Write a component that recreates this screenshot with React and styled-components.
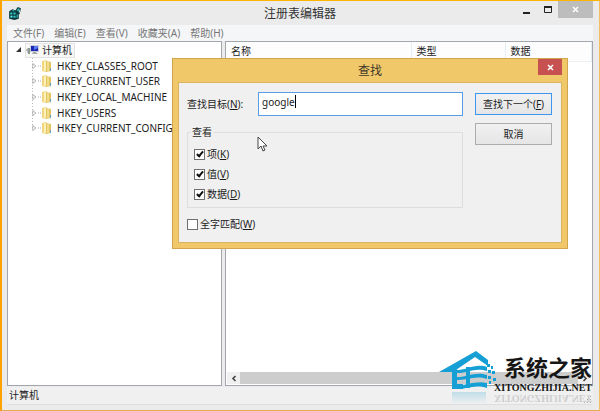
import React, { useState } from "react";
import styled, { createGlobalStyle } from "styled-components";

const ui = '"Noto Sans", "Noto Sans CJK SC", sans-serif';

const Global = createGlobalStyle`
  * { box-sizing: border-box; }
  body { margin: 0; background: #ebebeb; }
  button, input { font: inherit; color: inherit; }
`;

const Window = styled.main`
  position: relative;
  display: flex;
  flex-direction: column;
  height: 100vh;
  padding: 0 6px 5px 5px;
  overflow: hidden;
  background: #ebebeb;
  border-style: solid;
  border-width: 1px 1px 1px 2px;
  border-color: #ffb400 #f3bd62 #e5ab50 #ffa200;
  font: 10px/14px ${ui};
  color: #1c1c1c;
`;

const TitleBar = styled.header`
  display: grid;
  grid-template-columns: 100px 1fr 100px;
  align-items: center;
  height: 24px;
  flex: none;
`;

const Title = styled.h1`
  margin: 0;
  padding-top: 1px;
  text-align: center;
  font: 12px/20px ${ui};
  color: #333;
`;

const Controls = styled.div`
  display: flex;
  justify-content: flex-end;
  align-self: start;
`;

const Control = styled.button`
  display: grid;
  place-items: center;
  width: ${(p) => (p.$wide ? 35 : 21)}px;
  height: 17px;
  padding: 0;
  border: 0;
  background: ${(p) => (p.$wide ? "#bdbdbd" : "transparent")};
`;

const MenuBar = styled.nav`
  display: flex;
  gap: 10px;
  flex: none;
  height: 16px;
  padding-left: 6px;
  background: #f5f6f7;
`;

const MenuItem = styled.button`
  padding: 0;
  border: 0;
  background: none;
  line-height: 16px;
  color: #777;
`;

const Panes = styled.div`
  display: grid;
  grid-template-columns: 215px 1fr;
  gap: 3px;
  flex: 1;
  min-height: 0;
`;

const Pane = styled.section`
  display: flex;
  flex-direction: column;
  min-width: 0;
  background: #fff;
  border: 1px solid #a3a6ad;
`;

const TreeRoot = styled.div`
  display: flex;
  align-items: center;
  gap: 3px;
  height: 16px;
  padding-left: 8px;
`;

const RootLabel = styled.div`
  display: flex;
  align-items: center;
  gap: 2px;
  padding-right: 2px;
  height: 15px;
  background: #f7f7f7;
  border: 1px solid #e2e2e2;
`;

const TreeList = styled.ul`
  display: grid;
  grid-auto-rows: 1fr;
  height: 78px;
  margin: 0 0 0 24px;
  padding: 0;
  list-style: none;
  background: repeating-linear-gradient(#bbb 0 1px, transparent 1px 3px) 0 0 / 1px 70px no-repeat;
`;

const TreeItem = styled.li`
  display: flex;
  align-items: center;
  gap: 4px;
  white-space: nowrap;
`;

const Table = styled.table`
  width: 100%;
  table-layout: fixed;
  border-collapse: collapse;
`;

const Th = styled.th`
  width: ${(p) => p.$width || "auto"};
  height: 19px;
  padding: 0 0 0 5px;
  text-align: left;
  font-weight: 400;
  border-bottom: 1px solid #edf1f6;
  border-right: 1px solid #e7edf5;
  background: #fdfdfd;
`;

const ScrollBar = styled.div`
  display: grid;
  grid-template-columns: 13px 1fr 13px;
  height: 12px;
  margin: auto 1px 1px;
  background: #f0f0f0;
`;

const ScrollButton = styled.button`
  display: grid;
  place-items: center;
  padding: 0;
  border: 0;
  background: #f0f0f0;
`;

const Thumb = styled.div`
  background: #cdcdcd;
`;

const Status = styled.footer`
  display: flex;
  justify-content: space-between;
  align-items: flex-end;
  flex: none;
  height: 18px;
  margin-top: 1px;
  padding: 0 1px 0 2px;
  line-height: 17px;
  background: #f0f0f0;
  border-bottom: 1px solid #dedede;
`;

const Dialog = styled.div`
  position: absolute;
  top: 57px;
  left: 170px;
  width: 396px;
  padding: 0 5px 5px;
  background: #f0c869;
  border: 1px solid #cfa54d;
`;

const DialogBar = styled.header`
  display: grid;
  grid-template-columns: 24px 1fr 24px;
  height: 23px;
`;

const DialogTitle = styled.h2`
  margin: 0;
  text-align: center;
  font: 12px/23px ${ui};
  color: #40382a;
`;

const CloseButton = styled.button`
  display: grid;
  place-items: center;
  height: 16px;
  padding: 0;
  border: 0;
  background: #c75050;
`;

const Form = styled.form`
  display: grid;
  grid-template-columns: 1fr 77px;
  gap: 12px;
  padding: 9px 9px 11px 8px;
  background: #f0f0f0;
  border: 1px solid #d9b463;
`;

const Column = styled.div`
  display: flex;
  flex-direction: column;
`;

const Actions = styled(Column)`
  gap: 8px;
  padding-top: 1px;
`;

const FieldRow = styled.div`
  display: grid;
  grid-template-columns: 71px 1fr;
  align-items: center;
`;

const Field = styled.div`
  position: relative;
  display: grid;

  &::after {
    content: "";
    position: absolute;
    left: 37px;
    top: 3px;
    width: 1px;
    height: 13px;
    background: #000;
  }
`;

const TextInput = styled.input`
  min-width: 0;
  height: 24px;
  padding: 0 3px 5px;
  border: 1px solid #569de5;
  outline: 0;
  background: #fff;
  caret-color: transparent;
`;

const Action = styled.button`
  height: 22px;
  padding: 0;
  border: 1px solid ${(p) => (p.$primary ? "#3c96f0" : "#acacac")};
  background: linear-gradient(#f1f1f1, #e5e5e5);
`;

const Group = styled.fieldset`
  display: flex;
  flex-direction: column;
  gap: 6px;
  min-width: 0;
  margin: 9px 0;
  padding: 8px 6px 6px;
  border: 1px solid #dedede;
`;

const Legend = styled.legend`
  margin-left: -3px;
  padding: 0 2px 0 1px;
`;

const CheckLabel = styled.label`
  display: flex;
  align-items: center;
  gap: 2px;
  height: 14px;
`;

const Check = styled.input`
  appearance: none;
  display: grid;
  place-items: center;
  width: 11px;
  height: 11px;
  margin: 0;
  background: #fff;
  border: 1px solid #707070;

  &:checked::before {
    content: "";
    width: 2px;
    height: 5px;
    margin-bottom: 2px;
    border: solid #111;
    border-width: 0 2px 2px 0;
    box-sizing: content-box;
    transform: rotate(40deg);
  }
`;

const Pointer = styled.svg`
  position: absolute;
  left: 255px;
  top: 135px;
`;

const Brand = styled.div`
  position: absolute;
  right: 7px;
  bottom: 3px;
  display: flex;
`;

const BrandText = styled.div`
  margin-left: -3px;
  padding-top: 3px;
  text-align: right;
  color: #161616;
`;

const BrandName = styled.div`
  margin-bottom: 5px;
  font: bold 22px/24px "Noto Sans CJK SC", sans-serif;
`;

const BrandSite = styled.div`
  font: bold 10px/10px "Liberation Serif", serif;
  ${(p) => p.$mirrored && "transform: scaleY(-1); opacity: 0.16;"}
`;

function RegistryIcon() {
  return (
    <svg width="15" height="15" viewBox="0 0 14 14" aria-hidden="true">
      <path d="M2 5l3-2 3 1 2-3 3 1-1 5-1 1v4l-4 1-5-1z" fill="#10393c" />
      <path d="M3 6h2v2H3zm3 0h2v2H6zm-3 3h2v2H3zm3 0h2v2H6zm3-1h1v3H9zM9 4l2-2 1 1-2 2zM5 4h2v1H5z" fill="#2cc3c3" />
      <path d="M11 4h1v2h-1zM4 9h1v1H4z" fill="#c5ffff" />
    </svg>
  );
}

function ComputerIcon() {
  return (
    <svg width="14" height="12" viewBox="0 0 14 12" aria-hidden="true">
      <path d="M0 6h2M2 4v5" stroke="#999" />
      <path d="M2 4h2v6H2z" fill="#8b9b93" />
      <path d="M4 1h9v7H4z" fill="#c5ccd5" />
      <path d="M5 2h7v5H5z" fill="#1825b5" />
      <path d="M8 2h4v2L8 6z" fill="#5b7cea" />
      <path d="M7 8h3l2 2H6z" fill="#a5a9ac" />
    </svg>
  );
}

function FolderIcon() {
  return (
    <svg width="21" height="14" viewBox="0 0 21 14" aria-hidden="true">
      <path d="M.8 4.5l3.2 2.5-3.2 2.5z" fill="#fff" stroke="#a0a0a0" strokeWidth=".8" />
      <path d="M6 7h3" stroke="#aaa" strokeDasharray="1 1" />
      <path d="M10 2l4-1 1 1v10l-1 1-4-1z" fill="#f0d780" />
      <path d="M14 2l5 1v9l-5 1z" fill="#e3c463" />
      <path d="M12 2h2v10h-2z" fill="#fbf0ba" />
      <path d="M15 3h2v9h-2z" fill="#f1dc8c" />
      <path d="M18 9h1v3h-1z" fill="#6aa0bb" />
    </svg>
  );
}

function CrossIcon() {
  return (
    <svg width="7" height="7" viewBox="0 0 7 7" aria-hidden="true">
      <path d="M1 1l5 5M6 1L1 6" stroke="#fff" strokeWidth="1.5" />
    </svg>
  );
}

function Chevron({ right }) {
  return (
    <svg width="6" height="7" viewBox="0 0 6 7" aria-hidden="true">
      <path d={right ? "M1.5 1L4 3.5 1.5 6" : "M4.5 1L2 3.5 4.5 6"} fill="none" stroke="#444" strokeWidth="1.6" />
    </svg>
  );
}

function GripIcon() {
  return (
    <svg width="8" height="8" viewBox="0 0 8 8" aria-hidden="true">
      <path d="M6 0h1v1H6zM3 3h1v1H3zM6 3h1v1H6zM0 6h1v1H0zM3 6h1v1H3zM6 6h1v1H6z" fill="#aaa" />
    </svg>
  );
}

function HouseLogo() {
  return (
    <svg width="58" height="56" viewBox="0 0 58 56" aria-hidden="true">
      <defs>
        <linearGradient id="fade" x1="0" y1="0" x2="0" y2="1">
          <stop offset="0" stopColor="#30a5d5" stopOpacity=".25" />
          <stop offset="1" stopColor="#30a5d5" stopOpacity="0" />
        </linearGradient>
      </defs>
      <g fill="#169fd5">
        <path d="M0 21L37 0l12 9v6L36 6 14 21z" />
        <path d="M13 19l5-3v17h6v5H13z" />
        <path d="M17 19c10 1 18-7 31-3v4c-13-4-20 3-31 2z" />
        <path d="M17 26c10 1 18-6 31-2v4c-13-4-20 2-31 1z" />
        <path d="M13 34c12 2 22-5 35-2v5c-12-4-20 1-30 1h-5z" />
        <path d="M27 16h4v21h-4z" />
        <path d="M48 13h3v3h-3zM52 15h2v3h-2zM49 19h3v3h-3zM53 20h3v3h-3zM49 25h3v3h-3zM54 27h3v3h-3zM50 30h2v3h-2z" />
      </g>
      <path d="M13 41h34v12H13z" fill="url(#fade)" />
    </svg>
  );
}

const menus = ["文件(F)", "编辑(E)", "查看(V)", "收藏夹(A)", "帮助(H)"];
const keys = ["HKEY_CLASSES_ROOT", "HKEY_CURRENT_USER", "HKEY_LOCAL_MACHINE", "HKEY_USERS", "HKEY_CURRENT_CONFIG"];
const scopes = [["项", "K"], ["值", "V"], ["数据", "D"]];

function CheckOption({ text, hotkey, checked }) {
  return (
    <CheckLabel>
      <Check type="checkbox" defaultChecked={checked} />
      <span>{text}(<u>{hotkey}</u>)</span>
    </CheckLabel>
  );
}

function FindDialog() {
  const [query, setQuery] = useState("google");
  return (
    <Dialog role="dialog" aria-labelledby="find-title">
      <DialogBar>
        <span />
        <DialogTitle id="find-title">查找</DialogTitle>
        <CloseButton aria-label="关闭"><CrossIcon /></CloseButton>
      </DialogBar>
      <Form onSubmit={(e) => e.preventDefault()}>
        <Column>
          <FieldRow>
            <label htmlFor="query">查找目标(<u>N</u>):</label>
            <Field>
              <TextInput id="query" value={query} onChange={(e) => setQuery(e.target.value)} />
            </Field>
          </FieldRow>
          <Group>
            <Legend>查看</Legend>
            {scopes.map(([text, hotkey]) => (
              <CheckOption key={hotkey} text={text} hotkey={hotkey} checked />
            ))}
          </Group>
          <CheckOption text="全字匹配" hotkey="W" />
        </Column>
        <Actions>
          <Action $primary>查找下一个(<u>F</u>)</Action>
          <Action type="button">取消</Action>
        </Actions>
      </Form>
    </Dialog>
  );
}

export default function App() {
  return (
    <>
      <Global />
      <Window>
        <TitleBar>
          <RegistryIcon />
          <Title>注册表编辑器</Title>
          <Controls>
            <Control aria-label="最小化">
              <svg width="7" height="9" aria-hidden="true"><path d="M0 7h7v2H0z" fill="#222" /></svg>
            </Control>
            <Control aria-label="最大化">
              <svg width="8" height="7" aria-hidden="true"><path d="M.5 1v5.5h7V1" fill="none" stroke="#222" /><path d="M0 0h8v2H0z" fill="#222" /></svg>
            </Control>
            <Control $wide aria-label="关闭"><CrossIcon /></Control>
          </Controls>
        </TitleBar>
        <MenuBar>
          {menus.map((m) => <MenuItem key={m}>{m}</MenuItem>)}
        </MenuBar>
        <Panes>
          <Pane>
            <TreeRoot>
              <svg width="6" height="6" aria-hidden="true"><path d="M5 0v5H0z" fill="#333" /></svg>
              <RootLabel><ComputerIcon />计算机</RootLabel>
            </TreeRoot>
            <TreeList>
              {keys.map((k) => <TreeItem key={k}><FolderIcon />{k}</TreeItem>)}
            </TreeList>
          </Pane>
          <Pane>
            <Table>
              <thead>
                <tr><Th $width="185px">名称</Th><Th $width="94px">类型</Th><Th>数据</Th></tr>
              </thead>
            </Table>
            <ScrollBar>
              <ScrollButton aria-label="向左滚动"><Chevron /></ScrollButton>
              <Thumb />
              <ScrollButton aria-label="向右滚动"><Chevron right /></ScrollButton>
            </ScrollBar>
          </Pane>
        </Panes>
        <Status>计算机<GripIcon /></Status>
        <FindDialog />
        <Pointer width="12" height="18" viewBox="0 0 12 18" aria-hidden="true">
          <path d="M1 1v12l3-3 2 5 2-1-2-4h4z" fill="#fff" stroke="#444" strokeWidth="1" />
        </Pointer>
        <Brand>
          <HouseLogo />
          <BrandText>
            <BrandName>系统之家</BrandName>
            <BrandSite>XITONGZHIJIA.NET</BrandSite>
            <BrandSite $mirrored aria-hidden="true">XITONGZHIJIA.NET</BrandSite>
          </BrandText>
        </Brand>
      </Window>
    </>
  );
}
